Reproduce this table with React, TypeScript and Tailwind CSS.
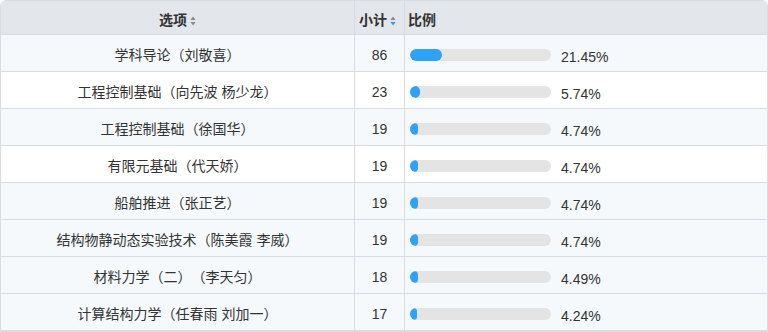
const rows = [
  { name: '学科导论（刘敬喜）', count: 86, pct: 21.45 },
  { name: '工程控制基础（向先波 杨少龙）', count: 23, pct: 5.74 },
  { name: '工程控制基础（徐国华）', count: 19, pct: 4.74 },
  { name: '有限元基础（代天娇）', count: 19, pct: 4.74 },
  { name: '船舶推进（张正艺）', count: 19, pct: 4.74 },
  { name: '结构物静动态实验技术（陈美霞 李威）', count: 19, pct: 4.74 },
  { name: '材料力学（二）（李天匀）', count: 18, pct: 4.49 },
  { name: '计算结构力学（任春雨 刘加一）', count: 17, pct: 4.24 },
];

// rows 2 and 4 are plain white, the rest carry the light tint
const whiteRows = [1, 3];

function SortIcon({ active }: { active?: boolean }) {
  return (
    <svg width="6" height="10" viewBox="0 0 6 10" className="ml-[3px] mt-[1px]">
      <path d="M3 0.5 L5.6 4 L0.4 4 Z" fill="#8a8a8a" />
      <path d="M3 9.5 L5.6 6 L0.4 6 Z" fill={active ? '#2a9cf2' : '#8a8a8a'} />
    </svg>
  );
}

export default function App() {
  return (
    <div
      className="w-[768px] bg-white text-[14px] text-[#333] [text-spacing-trim:space-all]"
      style={{ fontFamily: '"Liberation Sans", "Noto Sans CJK SC", sans-serif' }}
    >
      <div className="overflow-hidden rounded-t-[6px] border border-[#d9dce1]">
        {/* Header */}
        <div className="flex h-[34px] border-b border-[#d9dce1] bg-[#e3e6eb] font-bold">
          <div className="flex w-[354px] items-center justify-center border-r border-[#d9dce1] pt-[6px]">
            选项
            <SortIcon />
          </div>
          <div className="flex w-[50px] items-center border-r border-[#d9dce1] pl-[4px] pt-[6px]">
            小计
            <SortIcon active />
          </div>
          <div className="flex flex-1 items-center pl-[3px] pt-[6px]">比例</div>
        </div>

        {rows.map((r, i) => (
          <div
            key={i}
            className={
              'flex h-[37px] border-b border-[#d9dce1] ' +
              (whiteRows.includes(i) ? 'bg-white' : 'bg-[#f5f9fc]')
            }
          >
            <div className="flex w-[354px] items-center justify-center border-r border-[#d9dce1] pt-[5px]">
              {r.name}
            </div>
            <div className="flex w-[50px] items-center justify-center border-r border-[#d9dce1] pt-[5px]">
              {r.count}
            </div>
            <div className="flex flex-1 items-center pl-[5px] pt-[3px]">
              <div className="h-[12px] w-[141px] overflow-hidden rounded-full bg-[#e4e4e4]">
                <div
                  className="h-full rounded-full bg-[#2ea1f8]"
                  style={{ width: `${Math.max(r.pct + 1, 5)}%` }}
                />
              </div>
              <span className="ml-[10px] mt-[5px]">{r.pct.toFixed(2)}%</span>
            </div>
          </div>
        ))}
      </div>
    </div>
  );
}
